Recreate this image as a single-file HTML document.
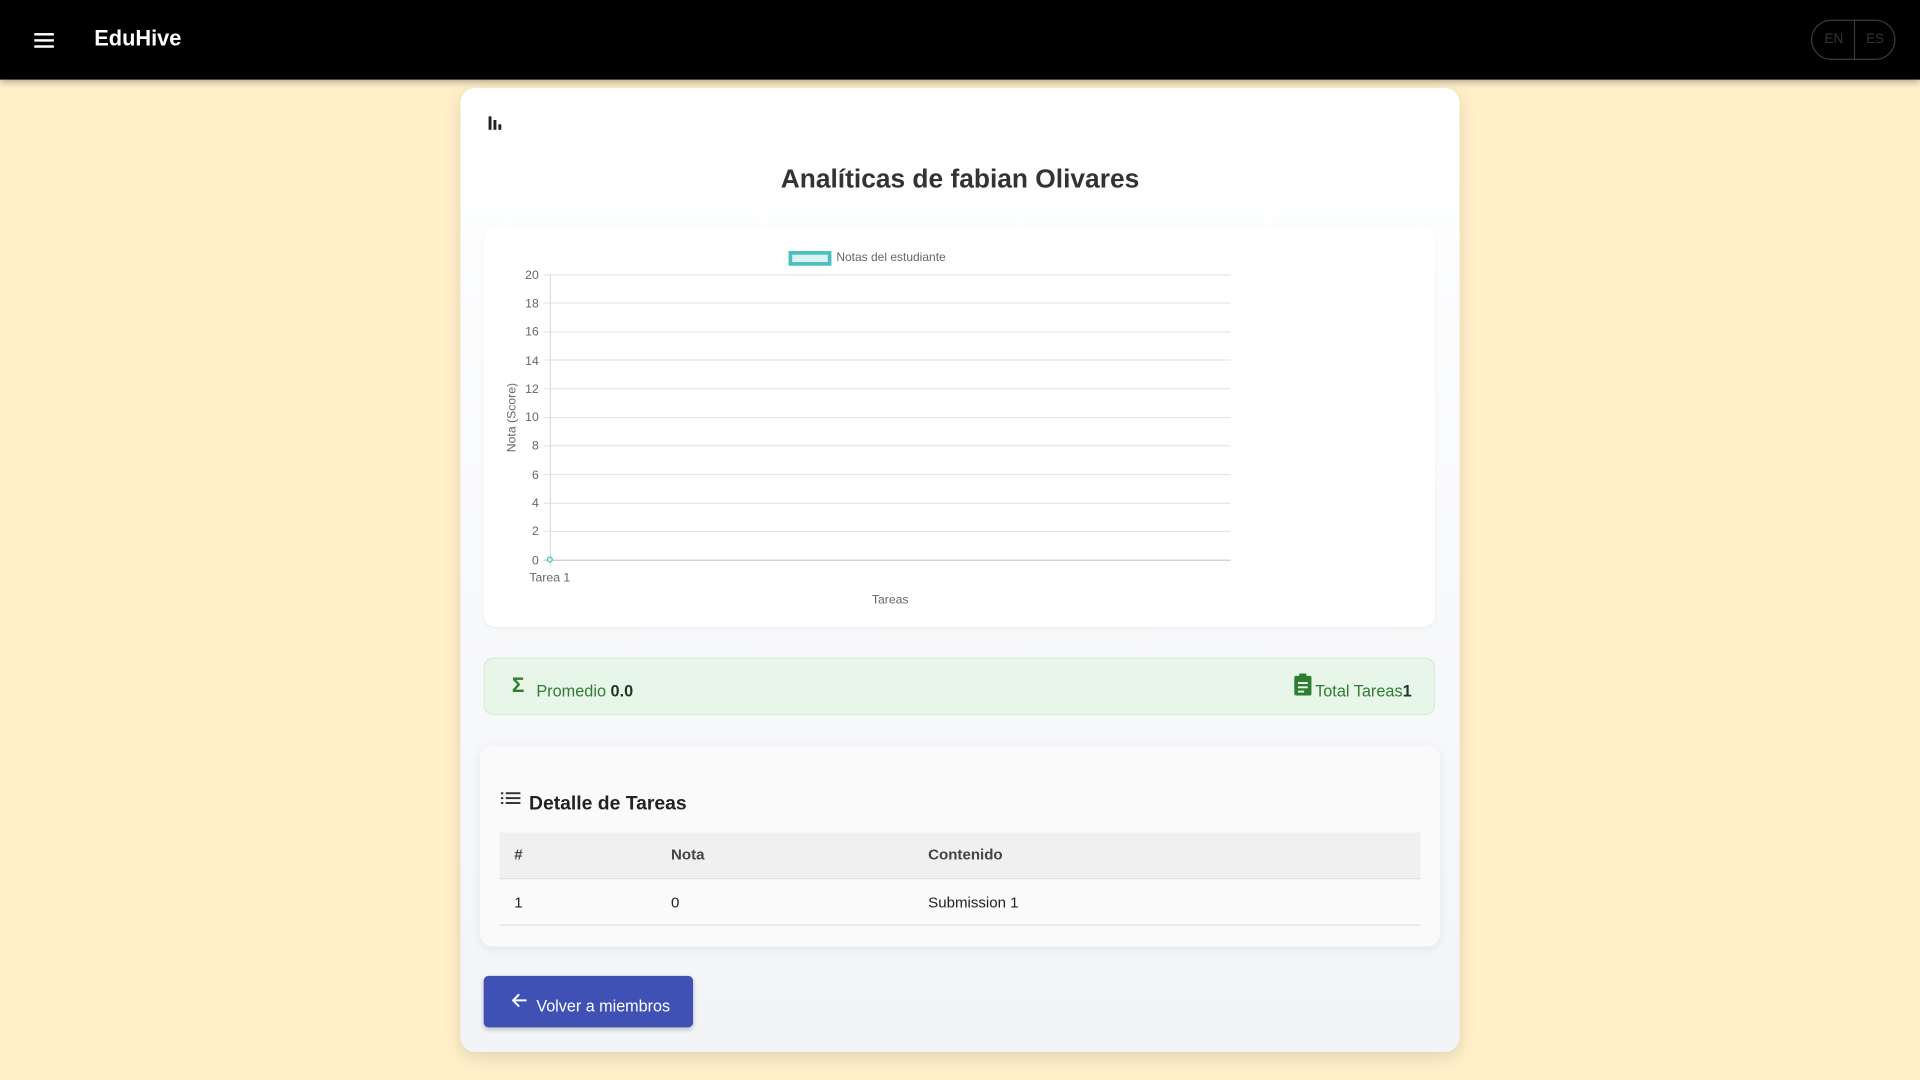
<!DOCTYPE html>
<html><head><meta charset="utf-8"><style>
*{box-sizing:border-box;margin:0;padding:0}
html,body{width:1920px;height:1080px;overflow:hidden;background:#fff0ca;font-family:"Liberation Sans",sans-serif}
#w{position:absolute;left:0;top:0;width:1568px;height:882px;transform:scale(1.2244898);transform-origin:0 0}
.a{position:absolute}
#hd{left:0;top:0;width:1568px;height:65px;background:#000;box-shadow:0 2px 6px rgba(0,0,0,.35)}
#card{left:376px;top:72px;width:816px;height:787px;border-radius:12px;background:linear-gradient(180deg,#fff 0%,#f2f4f8 100%);box-shadow:0 4px 14px rgba(0,0,0,.12)}
.t{white-space:nowrap;line-height:1}
</style></head><body><div id="w">
<div id="hd" class="a">
 <div class="a" style="left:28px;top:27px;width:16px;height:2px;background:#fff"></div>
 <div class="a" style="left:28px;top:32px;width:16px;height:2px;background:#fff"></div>
 <div class="a" style="left:28px;top:37px;width:16px;height:2px;background:#fff"></div>
 <div class="a t" style="left:77px;top:23px;color:#fff;font-weight:bold;font-size:17.8px">EduHive</div>
 <div class="a" style="left:1479px;top:16px;width:69px;height:33px;border:1px solid #3a3a3a;border-radius:17px"></div>
 <div class="a" style="left:1514px;top:16px;width:1px;height:33px;background:#3a3a3a"></div>
 <div class="a t" style="left:1490px;top:27px;color:#333;font-size:11px">EN</div>
 <div class="a t" style="left:1524px;top:27px;color:#333;font-size:11px">ES</div>
</div>
<div id="card" class="a"></div>
<svg class="a" style="left:398px;top:94px" width="14" height="14" viewBox="0 0 14 14"><rect x="1" y="1" width="2.4" height="11" fill="#222"/><rect x="5" y="4" width="2.4" height="8" fill="#222"/><rect x="9" y="7.5" width="2.4" height="4.5" fill="#222"/></svg>
<div class="a t" style="left:376px;width:816px;text-align:center;top:136px;font-size:21.5px;font-weight:bold;color:#333">Analíticas de fabian Olivares</div>
<div class="a" style="left:395px;top:185px;width:777px;height:327px;background:#fff;border-radius:10px;box-shadow:0 1px 4px rgba(0,0,0,.05)"></div>
<div class="a" style="left:644px;top:205px;width:35px;height:12px;border:3px solid #4bc0c0;background:#dbf2f2"></div>
<div class="a t" style="left:683px;top:206px;font-size:9.8px;color:#666">Notas del estudiante</div>
<svg class="a" style="left:400px;top:215px" width="620" height="290">
<g stroke="#e5e5e5" stroke-width="1">
<line x1="44" y1="9.5" x2="605" y2="9.5"/><line x1="44" y1="32.5" x2="605" y2="32.5"/><line x1="44" y1="56" x2="605" y2="56"/><line x1="44" y1="79" x2="605" y2="79"/><line x1="44" y1="102.5" x2="605" y2="102.5"/><line x1="44" y1="126" x2="605" y2="126"/><line x1="44" y1="149" x2="605" y2="149"/><line x1="44" y1="172.5" x2="605" y2="172.5"/><line x1="44" y1="196" x2="605" y2="196"/><line x1="44" y1="219" x2="605" y2="219"/>
<line x1="49.5" y1="9" x2="49.5" y2="247" stroke="#ddd"/></g>
<line x1="44" y1="242.5" x2="605" y2="242.5" stroke="#ccc"/>
<circle cx="49" cy="242" r="2" fill="#dbf2f2" stroke="#4bc0c0"/>
<g font-family="Liberation Sans" font-size="10" fill="#666" text-anchor="end">
<text x="40" y="13">20</text><text x="40" y="36">18</text><text x="40" y="59">16</text><text x="40" y="83">14</text><text x="40" y="106">12</text><text x="40" y="129">10</text><text x="40" y="152">8</text><text x="40" y="176">6</text><text x="40" y="199">4</text><text x="40" y="222">2</text><text x="40" y="246">0</text></g>
<text x="49" y="260" font-family="Liberation Sans" font-size="10" fill="#666" text-anchor="middle">Tarea 1</text>
<text x="327" y="278" font-family="Liberation Sans" font-size="10" fill="#666" text-anchor="middle">Tareas</text>
<text transform="translate(21,126) rotate(-90)" font-family="Liberation Sans" font-size="10" fill="#666" text-anchor="middle">Nota (Score)</text>
</svg>
<div class="a" style="left:395px;top:537px;width:777px;height:47px;background:#e8f5e9;border:1px solid #d6ecd8;border-radius:8px"></div>
<div class="a t" style="left:418px;top:551px;font-size:17px;color:#2e7d32;font-weight:bold">Σ</div>
<div class="a t" style="left:438px;top:558px;font-size:13.3px;color:#2e7d32">Promedio <b style="color:#1b3a1d">0.0</b></div>
<svg class="a" style="left:1056px;top:550px" width="16" height="18" viewBox="0 0 16 18"><rect x="1" y="2" width="14" height="16" rx="1.5" fill="#2e7d32"/><rect x="5" y="0" width="6" height="4" rx="1" fill="#2e7d32"/><rect x="4" y="7" width="8" height="1.6" fill="#e8f5e9"/><rect x="4" y="10.5" width="8" height="1.6" fill="#e8f5e9"/><rect x="4" y="14" width="5" height="1.6" fill="#e8f5e9"/></svg>
<div class="a t" style="left:1074px;top:558px;font-size:13.3px;color:#2e7d32">Total Tareas<b style="color:#1b3a1d">1</b></div>
<div class="a" style="left:392px;top:609px;width:784px;height:164px;background:#fafafa;border-radius:10px;box-shadow:0 2px 8px rgba(0,0,0,.07)"></div>
<svg class="a" style="left:409px;top:646px" width="17" height="12" viewBox="0 0 17 12"><g fill="#333"><rect x="0" y="1" width="2" height="1.6"/><rect x="4" y="1" width="12" height="1.6"/><rect x="0" y="5" width="2" height="1.6"/><rect x="4" y="5" width="12" height="1.6"/><rect x="0" y="9" width="2" height="1.6"/><rect x="4" y="9" width="12" height="1.6"/></g></svg>
<div class="a t" style="left:432px;top:649px;font-size:15.8px;font-weight:bold;color:#222">Detalle de Tareas</div>
<div class="a" style="left:408px;top:680px;width:752px;height:38px;background:#f0f0f0;border-bottom:1px solid #e0e0e0"></div>
<div class="a t" style="left:420px;top:692px;font-size:12.3px;font-weight:bold;color:#444">#</div>
<div class="a t" style="left:548px;top:692px;font-size:12.3px;font-weight:bold;color:#444">Nota</div>
<div class="a t" style="left:758px;top:692px;font-size:12.3px;font-weight:bold;color:#444">Contenido</div>
<div class="a" style="left:408px;top:755px;width:752px;height:1px;background:#e0e0e0"></div>
<div class="a t" style="left:420px;top:731px;font-size:12.3px;color:#222">1</div>
<div class="a t" style="left:548px;top:731px;font-size:12.3px;color:#222">0</div>
<div class="a t" style="left:758px;top:731px;font-size:12.3px;color:#222">Submission 1</div>
<div class="a" style="left:395px;top:797px;width:171px;height:42px;background:#3f51b5;border-radius:4px;box-shadow:0 2px 4px rgba(0,0,0,.2)"></div>
<svg class="a" style="left:417px;top:810px" width="14" height="14" viewBox="0 0 14 14"><path d="M13 7H2M7 2L2 7l5 5" stroke="#fff" stroke-width="1.6" fill="none"/></svg>
<div class="a t" style="left:438px;top:815px;font-size:13.2px;color:#fff">Volver a miembros</div>
</div></body></html>
